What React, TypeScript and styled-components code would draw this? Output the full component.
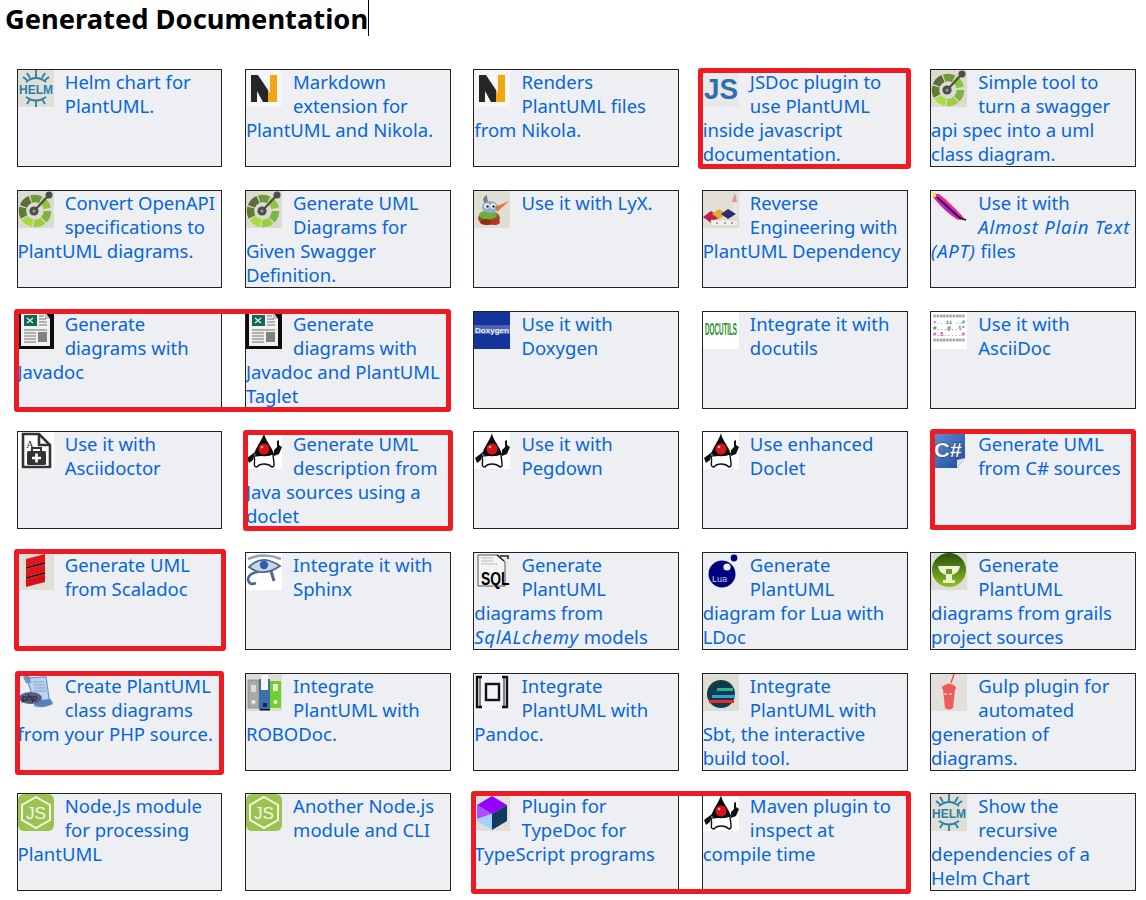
import React from "react";
import styled, { createGlobalStyle } from "styled-components";

const Global = createGlobalStyle`
  html, body { margin: 0; padding: 0; background: #fff; }
  body { font-family: "Noto Sans", "Open Sans", "Liberation Sans", sans-serif; }
`;

const Page = styled.div`
  position: relative;
  width: 1146px;
  height: 900px;
  overflow: hidden;
`;

const TitleRow = styled.div`
  height: 69.2px;
  padding-left: 5px;
  box-sizing: border-box;
`;

const Title = styled.h1`
  display: inline-block;
  margin: 0;
  height: 36px;
  line-height: 38px;
  font-size: 27.3px;
  font-weight: 700;
  color: #000;
  white-space: nowrap;
  border-right: 1px solid #000;
`;

const Grid = styled.div`
  display: grid;
  grid-template-columns: repeat(5, 205.9px);
  grid-auto-rows: 98px;
  column-gap: 22.5px;
  row-gap: 22.7px;
  padding-left: 16.5px;
`;

const Card = styled.a`
  display: block;
  box-sizing: border-box;
  border: 1px solid #222;
  background: #eeeff3;
  color: #0666dc;
  font-size: 18.5px;
  line-height: 24px;
  text-decoration: none;
  overflow: hidden;
`;

const Emphasis = styled.em`
  letter-spacing: 0.75px;
`;

const Svg = styled.svg`
  float: left;
  display: block;
  width: 36px;
  height: 37px;
  margin-right: 11.2px;
`;

const Mark = styled.div<{ $x: number; $y: number; $w: number; $h: number }>`
  position: absolute;
  box-sizing: border-box;
  left: ${(p) => p.$x}px;
  top: ${(p) => p.$y}px;
  width: ${(p) => p.$w}px;
  height: ${(p) => p.$h}px;
  border: 5px solid #ed1c24;
  border-radius: 3px;
  pointer-events: none;
`;

const sans = "Liberation Sans, sans-serif";

const Helm = () => (
  <>
    <rect width="36" height="37" fill="#dfdfd8" />
    <g fill="none" stroke="#2b7fa3" strokeWidth="1.8">
      <path d="M8 12Q18 4 28 12M18 0V7M9 3L12 8M27 3L24 8M5 7L9 10M31 7L27 10" />
      <path d="M8 27Q18 34 28 27M18 37V31M9 34L12 29M27 34L24 29" />
    </g>
    <text x="1" y="24" fontFamily={sans} fontWeight="700" fontSize="13.5" fill="#2b7fa3" textLength="34" lengthAdjust="spacingAndGlyphs">HELM</text>
  </>
);

const Nikola = () => (
  <>
    <rect width="36" height="37" fill="#f6f6f6" />
    <path d="M24 5H31V32H22V20L24 23Z" fill="#f0a513" />
    <path d="M5 5H12L22 20V32H17L11 21V32H5Z" fill="#262626" />
  </>
);

const swaggerSegments = [
  { off: 0, col: "#7db342" },
  { off: -14, col: "#9ccf3c" },
  { off: -28, col: "#a6dc3d" },
  { off: -42, col: "#5e7a33" },
  { off: -56, col: "#5a6e38" },
  { off: -70, col: "#6f9a38" },
  { off: -84, col: "#8cc63f" },
];

const Swagger = () => (
  <>
    <rect width="36" height="37" fill="#dcdbd2" />
    <g fill="none" strokeWidth="7.5">
      {swaggerSegments.map((s) => (
        <circle key={s.off} cx="17" cy="20" r="12.5" pathLength={100} stroke={s.col} strokeDasharray="12.5 87.5" strokeDashoffset={s.off} />
      ))}
    </g>
    <line x1="16" y1="20" x2="31" y2="4" stroke="#4b4f47" strokeWidth="2.2" />
    <circle cx="31" cy="4" r="3.5" fill="#4b4f47" />
    <circle cx="16" cy="20" r="4.6" fill="#4b4f47" />
    <circle cx="16" cy="20" r="1.6" fill="#9a9c95" />
  </>
);

const JsDoc = () => (
  <>
    <rect width="36" height="37" fill="#e8e8ea" />
    <text x="1" y="29" fontFamily={sans} fontWeight="700" fontSize="30" fill="#2f6fb0" textLength="34" lengthAdjust="spacingAndGlyphs">JS</text>
  </>
);

const Lyx = () => (
  <>
    <rect width="36" height="37" fill="#dfded5" />
    <path d="M11 14Q7 6 13 4Q13 10 16 14Z" fill="#77787a" />
    <ellipse cx="15" cy="27" rx="11" ry="7" fill="#a04a22" />
    <ellipse cx="14" cy="24" rx="9" ry="4.5" fill="#6fae3b" />
    <ellipse cx="12" cy="31" rx="6" ry="3" fill="#8e2f18" />
    <ellipse cx="21" cy="31" rx="5" ry="3" fill="#b33a20" />
    <ellipse cx="16" cy="16" rx="8" ry="6" fill="#8fb0cf" />
    <circle cx="13" cy="15" r="2.6" fill="#fff" />
    <circle cx="19" cy="15" r="2.6" fill="#fff" />
    <circle cx="13.5" cy="15.5" r="1.3" fill="#1b2a3a" />
    <circle cx="19.5" cy="15.5" r="1.3" fill="#1b2a3a" />
    <path d="M21 16L35 10L23 21Z" fill="#e9703a" />
  </>
);

const Dependency = () => (
  <>
    <rect width="36" height="37" fill="#e1dfd8" />
    <path d="M32 2L34 11H29Z" fill="#ea8f8f" />
    <rect x="30" y="11" width="4" height="14" fill="#e9e7e0" />
    <path d="M0 26L8 20L17 26L8 32Z" fill="#bd2147" />
    <path d="M9 23L16 18L24 23L16 28Z" fill="#e0a92c" />
    <path d="M18 23L25 18L33 23L25 28Z" fill="#2d2a73" />
    <rect x="8" y="29" width="27" height="6" fill="#f2f1ec" stroke="#c5c3bc" strokeWidth="0.6" />
    <circle cx="14" cy="32" r="1" fill="#888" />
    <circle cx="22" cy="32" r="1" fill="#888" />
    <circle cx="29" cy="32" r="1" fill="#888" />
  </>
);

const Feather = () => (
  <>
    <path d="M2 3L8 3C16 9 27 20 33 27L27 29C18 24 7 13 2 6Z" fill="#ff1f8f" />
    <path d="M4 5C12 10 22 20 29 26L25 26C17 22 8 13 4 5Z" fill="#a92bd0" />
    <path d="M1 1L5 2L5 6L2 6Z" fill="#f3e24a" />
    <path d="M6 6L30 28" stroke="#160a5a" strokeWidth="1.8" />
    <path d="M29 27L35 29" stroke="#111" strokeWidth="1.8" />
  </>
);

const Javadoc = () => (
  <>
    <rect width="36" height="37" fill="#0d0d0d" />
    <path d="M3 0H27L32 7V34H3Z" fill="#f1f1ee" />
    <path d="M27 0V7H32Z" fill="#bfc4c1" />
    <rect x="6" y="3" width="13" height="11" fill="#14665a" />
    <path d="M9 6L15 11M15 6L9 11" stroke="#e9f2ee" strokeWidth="1.2" />
    <path d="M21 4H26M21 7H28M21 10H29M21 13H29M6 18H29M6 21H18M6 24H18M6 27H18M6 30H18" stroke="#6f7373" strokeWidth="1.2" />
    <rect x="20" y="20" width="9" height="10" fill="#7f8281" />
  </>
);

const AsciiDoctor = () => (
  <>
    <rect width="36" height="37" fill="#fff" />
    <path d="M5 2H21L32 13V35H5Z" fill="none" stroke="#333" strokeWidth="2.6" />
    <path d="M21 2V13H32" fill="none" stroke="#333" strokeWidth="2.6" />
    <text x="8" y="16" fontFamily="Liberation Serif, serif" fontSize="11" fill="#333">A</text>
    <rect x="9" y="19" width="19" height="14" rx="1.5" fill="#333" />
    <path d="M14 19V16H23V19" fill="none" stroke="#333" strokeWidth="2" />
    <path d="M18.5 21.5V30.5M14 26H23" stroke="#fff" strokeWidth="2.6" />
  </>
);

const Duke = () => (
  <>
    <rect width="36" height="37" fill="#fff" />
    <path d="M8 24C10 30 6 35 11 35C14 31 22 31 26 35C30 35 27 28 27 22Z" fill="#fff" stroke="#111" strokeWidth="1.4" />
    <path d="M18 1C19 8 26 15 28 22C22 25 14 25 8 22C10 15 16 8 18 1Z" fill="#0c0c0c" />
    <circle cx="18" cy="17" r="5.5" fill="#d4161c" />
    <circle cx="16" cy="15" r="1.3" fill="#f2a0a0" />
    <path d="M9 20L1 26L3 31L7 28Z" fill="#111" />
    <path d="M28 18L31 15V9L33 8V13L36 15L33 22L28 24Z" fill="#111" />
  </>
);

const CSharp = () => (
  <>
    <defs>
      <linearGradient id="cs" x1="0" y1="0" x2="1" y2="1">
        <stop offset="0" stopColor="#5f8fd6" />
        <stop offset="1" stopColor="#1f4a9c" />
      </linearGradient>
    </defs>
    <path d="M2 2H34V26L26 36H2Z" fill="url(#cs)" />
    <path d="M34 26L26 36L26 28Z" fill="#dfe4ea" />
    <text x="3" y="25" fontFamily={sans} fontWeight="700" fontSize="20" fill="#eef2f8" stroke="#1c2f55" strokeWidth="0.9" paintOrder="stroke" textLength="28" lengthAdjust="spacingAndGlyphs">C#</text>
  </>
);

const Scala = () => (
  <>
    <rect width="36" height="37" fill="#dfded7" />
    <path d="M8 6L27 1V9L8 14Z" fill="#e3141a" />
    <path d="M8 14L27 9V11L8 16Z" fill="#2a1214" />
    <path d="M8 16L27 11V19L8 24Z" fill="#e3141a" />
    <path d="M8 24L27 19V21L8 26Z" fill="#2a1214" />
    <path d="M8 26L27 21V29L8 34Z" fill="#d80f16" />
  </>
);

const Sphinx = () => (
  <>
    <rect width="36" height="37" fill="#fff" />
    <path d="M2 6Q18 -1 35 6" fill="none" stroke="#8ea3c2" strokeWidth="2.6" />
    <path d="M3 14Q13 4 24 8Q30 10 34 13Q24 20 14 19Q8 18 3 14Z" fill="#c9d5e8" stroke="#4d6a95" strokeWidth="1.8" />
    <circle cx="18" cy="12" r="4.2" fill="#2f5dab" />
    <path d="M12 19Q3 20 2 26Q3 33 10 30" fill="none" stroke="#4d6a95" strokeWidth="2.6" />
    <path d="M25 18L28 28" stroke="#4d6a95" strokeWidth="3" />
  </>
);

const Sql = () => (
  <>
    <path d="M4 2H24L31 9V33H4Z" fill="#f4f4f2" stroke="#555" strokeWidth="1" />
    <path d="M7 5H19M7 8H19M7 11H24" stroke="#bbb" strokeWidth="1" />
    <path d="M23 2L30 8M26 3H34V6" fill="none" stroke="#222" strokeWidth="1.6" />
    <text x="7" y="32" fontFamily={sans} fontWeight="700" fontSize="19" fill="#000" textLength="28.5" lengthAdjust="spacingAndGlyphs">SQL</text>
  </>
);

const Lua = () => (
  <>
    <circle cx="19" cy="21" r="13.5" fill="#00007d" />
    <circle cx="24" cy="14" r="3.6" fill="#f0f1f5" />
    <circle cx="31" cy="5" r="3.4" fill="#00007d" />
    <text x="9" y="29" fontFamily={sans} fontSize="9" fill="#c8cbe8">Lua</text>
  </>
);

const Grails = () => (
  <>
    <rect width="36" height="37" fill="#dfded6" />
    <defs>
      <linearGradient id="gr" x1="0" y1="0" x2="0" y2="1">
        <stop offset="0" stopColor="#2c4f0e" />
        <stop offset="1" stopColor="#8dc21f" />
      </linearGradient>
    </defs>
    <circle cx="18" cy="17" r="17" fill="url(#gr)" />
    <path d="M7 13H29C28 20 23 21 21 22V27H24V30H12V27H15V22C13 21 8 20 7 13Z" fill="#eaf3d5" />
    <path d="M15 16H21V21H15Z" fill="#6e9a1c" />
  </>
);

const Php = () => (
  <>
    <path d="M8 4L28 3L31 24L34 30Q25 34 17 32L12 14Z" fill="#bcd3ee" stroke="#6b93c4" strokeWidth="1.2" />
    <path d="M5 3Q9 0 12 3L13 9H8Z" fill="#6d93c2" />
    <path d="M15 8H26M15 11H27M16 14H28M16 17H28" stroke="#7fa2cc" strokeWidth="1.1" />
    <path d="M17 31Q27 35 35 29L32 25L16 27Z" fill="#4f82bf" />
    <ellipse cx="12.5" cy="24" rx="11.5" ry="6" fill="#5a5d80" />
    <text x="4" y="27" fontFamily={sans} fontSize="9" fontStyle="italic" fill="#15151f">php</text>
  </>
);

const Robodoc = () => (
  <>
    <rect width="36" height="37" fill="#dedcd6" />
    <rect x="2" y="6" width="11" height="28" fill="#a8aba5" stroke="#777" strokeWidth="0.6" />
    <rect x="5" y="11" width="5" height="7" fill="#d9dad6" />
    <circle cx="7.5" cy="28" r="2" fill="#eee" />
    <rect x="13" y="5" width="11" height="31" fill="#3f6fa8" />
    <rect x="15" y="1" width="7" height="15" fill="#f4f6f8" />
    <rect x="17" y="29" width="4" height="4" fill="#122a4c" />
    <rect x="24" y="7" width="11" height="27" fill="#6fcf2e" />
    <rect x="27" y="10" width="5" height="7" fill="#e3f5d0" />
    <circle cx="29.5" cy="28" r="2" fill="#eaf7dd" />
    <rect x="14" y="35" width="10" height="1.5" fill="#111" />
  </>
);

const Pandoc = () => (
  <>
    <rect width="36" height="37" fill="#f3f5f9" />
    <path d="M8 3H3V33H8" fill="none" stroke="#111" strokeWidth="2.4" />
    <path d="M28 3H33V33H28" fill="none" stroke="#111" strokeWidth="2.4" />
    <rect x="12" y="10" width="13" height="16" fill="none" stroke="#111" strokeWidth="2.4" />
    <path d="M6 3V33M30 3V33" stroke="#111" strokeWidth="1" />
  </>
);

const Sbt = () => (
  <>
    <rect width="36" height="37" fill="#dfded6" />
    <circle cx="18" cy="20" r="14" fill="#0f3d47" />
    <path d="M14 14H30V17H14Z" fill="#26b29c" />
    <path d="M9 21H32V24H9Z" fill="#3a9bd8" />
    <path d="M6 26H31V29H6Z" fill="#e62c2c" />
  </>
);

const Gulp = () => (
  <>
    <rect width="36" height="37" fill="#e2e0d9" />
    <path d="M20 9L23 0" stroke="#ea4d4d" strokeWidth="1.4" />
    <path d="M11 13Q18 6 25 13V15H24L22 34Q18 37 14 34L12 15H11Z" fill="#ec5a5a" />
    <path d="M13 20H23" stroke="#f6b2b0" strokeWidth="2" strokeDasharray="3 2" />
  </>
);

const Node = () => (
  <>
    <rect width="36" height="37" rx="6" fill="#9cc250" />
    <path d="M18 3L32 11V26L18 34L4 26V11Z" fill="none" stroke="#f3f8e8" strokeWidth="2" />
    <text x="8" y="25" fontFamily={sans} fontSize="16" fill="#f3f8e8" textLength="20" lengthAdjust="spacingAndGlyphs">JS</text>
  </>
);

const TypeDoc = () => (
  <>
    <rect width="36" height="37" fill="#e1e0d8" />
    <path d="M18 2L33 11L18 20L3 11Z" fill="#9600ff" />
    <path d="M3 11L18 20L3 25Z" fill="#b04dff" />
    <path d="M3 25L18 20V36L3 27Z" fill="#a2d2fb" />
    <path d="M18 20L33 11V27L18 36Z" fill="#113a5c" />
  </>
);

const Doxygen = () => (
  <>
    <rect width="36" height="37" fill="#14349c" />
    <rect y="13" width="36" height="9" fill="#4c64b4" />
    <text x="1" y="20.5" fontFamily={sans} fontWeight="700" fontSize="8" fill="#f0f0f4" textLength="34" lengthAdjust="spacingAndGlyphs">Doxygen</text>
  </>
);

const Docutils = () => (
  <>
    <rect width="36" height="37" fill="#fff" />
    <text x="2" y="23" fontFamily={sans} fontWeight="700" fontSize="16" fill="#1d8a1d" textLength="32" lengthAdjust="spacingAndGlyphs">DOCUTILS</text>
  </>
);

const AsciiDoc = () => {
  const rows: [number, string, string][] = [
    [6, "##########", "#8a8a8a"],
    [12, ">.. ii ..#", "#4a6fb0"],
    [18, "#...@..l*", "#555"],
    [24, "#.$.....#", "#d23fb0"],
    [30, "##########", "#8a8a8a"],
  ];
  return (
    <>
      <rect width="36" height="37" fill="#fff" />
      {rows.map(([y, t, c]) => (
        <text key={y} x="2" y={y} fontFamily="Liberation Mono, monospace" fontWeight="700" fontSize="6" fill={c} textLength="32" lengthAdjust="spacingAndGlyphs">{t}</text>
      ))}
    </>
  );
};

const icons = {
  Helm, Nikola, Swagger, JsDoc, Lyx, Dependency, Feather, Javadoc, AsciiDoctor, Duke, CSharp,
  Scala, Sphinx, Sql, Lua, Grails, Php, Robodoc, Pandoc, Sbt, Gulp, Node, TypeDoc, Doxygen, Docutils, AsciiDoc,
};

type Item = { icon: keyof typeof icons; text: React.ReactNode };

const items: Item[] = [
  { icon: "Helm", text: "Helm chart for PlantUML." },
  { icon: "Nikola", text: "Markdown extension for PlantUML and Nikola." },
  { icon: "Nikola", text: "Renders PlantUML files from Nikola." },
  { icon: "JsDoc", text: "JSDoc plugin to use PlantUML inside javascript documentation." },
  { icon: "Swagger", text: "Simple tool to turn a swagger api spec into a uml class diagram." },
  { icon: "Swagger", text: "Convert OpenAPI specifications to PlantUML diagrams." },
  { icon: "Swagger", text: "Generate UML Diagrams for Given Swagger Definition." },
  { icon: "Lyx", text: "Use it with LyX." },
  { icon: "Dependency", text: "Reverse Engineering with PlantUML Dependency" },
  { icon: "Feather", text: <>Use it with<br /><Emphasis>Almost Plain Text (APT)</Emphasis> files</> },
  { icon: "Javadoc", text: "Generate diagrams with Javadoc" },
  { icon: "Javadoc", text: "Generate diagrams with Javadoc and PlantUML Taglet" },
  { icon: "Doxygen", text: "Use it with Doxygen" },
  { icon: "Docutils", text: "Integrate it with docutils" },
  { icon: "AsciiDoc", text: "Use it with AsciiDoc" },
  { icon: "AsciiDoctor", text: "Use it with Asciidoctor" },
  { icon: "Duke", text: "Generate UML description from Java sources using a doclet" },
  { icon: "Duke", text: "Use it with Pegdown" },
  { icon: "Duke", text: "Use enhanced Doclet" },
  { icon: "CSharp", text: "Generate UML from C# sources" },
  { icon: "Scala", text: "Generate UML from Scaladoc" },
  { icon: "Sphinx", text: "Integrate it with Sphinx" },
  { icon: "Sql", text: <>Generate PlantUML diagrams from <Emphasis>SqlALchemy</Emphasis> models</> },
  { icon: "Lua", text: "Generate PlantUML diagram for Lua with LDoc" },
  { icon: "Grails", text: "Generate PlantUML diagrams from grails project sources" },
  { icon: "Php", text: "Create PlantUML class diagrams from your PHP source." },
  { icon: "Robodoc", text: "Integrate PlantUML with ROBODoc." },
  { icon: "Pandoc", text: "Integrate PlantUML with Pandoc." },
  { icon: "Sbt", text: "Integrate PlantUML with Sbt, the interactive build tool." },
  { icon: "Gulp", text: "Gulp plugin for automated generation of diagrams." },
  { icon: "Node", text: "Node.Js module for processing PlantUML" },
  { icon: "Node", text: "Another Node.js module and CLI" },
  { icon: "TypeDoc", text: "Plugin for TypeDoc for TypeScript programs" },
  { icon: "Duke", text: <>Maven plugin to inspect at<br />compile time</> },
  { icon: "Helm", text: "Show the recursive dependencies of a Helm Chart" },
];

const marks = [
  { x: 698, y: 68, w: 213, h: 101 },
  { x: 14, y: 309, w: 437, h: 103 },
  { x: 243, y: 430, w: 210, h: 101 },
  { x: 930, y: 429, w: 206, h: 101 },
  { x: 14, y: 549, w: 212, h: 102 },
  { x: 15, y: 671, w: 209, h: 104 },
  { x: 471, y: 791, w: 440, h: 103 },
];

export default function App() {
  return (
    <Page>
      <Global />
      <TitleRow>
        <Title>Generated Documentation</Title>
      </TitleRow>
      <Grid>
        {items.map((item, i) => {
          const Icon = icons[item.icon];
          return (
            <Card key={i} href="#">
              <Svg viewBox="0 0 36 37">
                <Icon />
              </Svg>
              {item.text}
            </Card>
          );
        })}
      </Grid>
      {marks.map((m) => (
        <Mark key={`${m.x}-${m.y}`} $x={m.x} $y={m.y} $w={m.w} $h={m.h} />
      ))}
    </Page>
  );
}
